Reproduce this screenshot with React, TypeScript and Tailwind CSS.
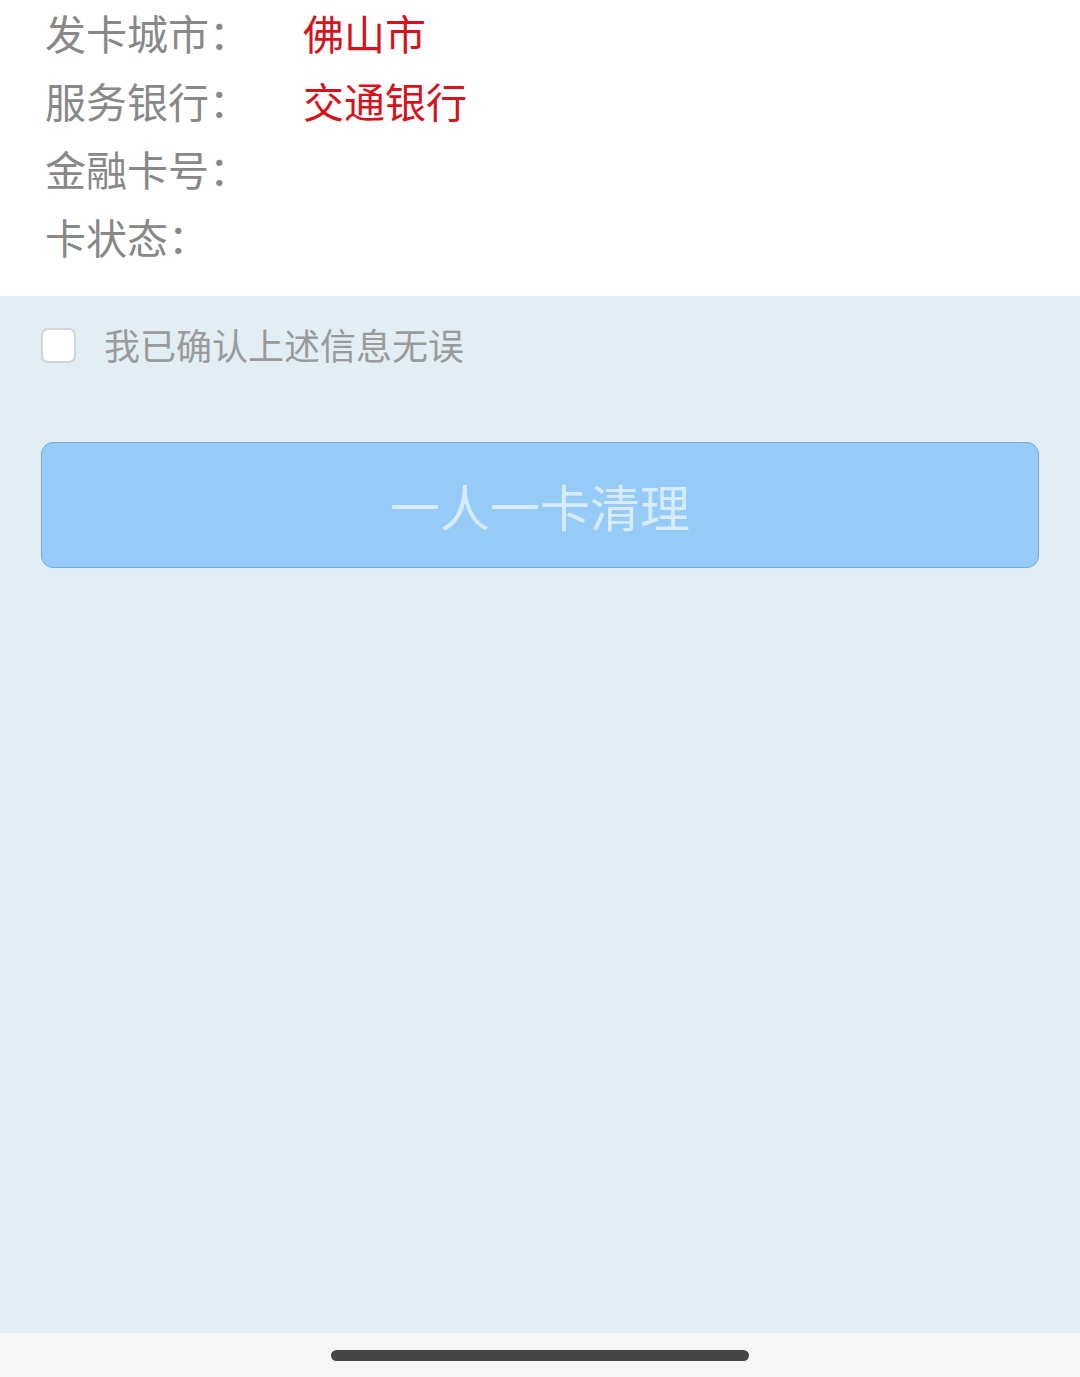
const FONT = { fontFamily: '"Noto Sans CJK SC", "Noto Sans", sans-serif' };

const rows: { label: string; value?: string }[] = [
  { label: '发卡城市：', value: '佛山市' },
  { label: '服务银行：', value: '交通银行' },
  { label: '金融卡号：' },
  { label: '卡状态：' },
];

export default function App() {
  return (
    <div className="flex h-[1377px] w-[1080px] flex-col bg-[#e2edf4]" style={FONT}>
      <div className="bg-white pb-[26px]">
        <div className="-mt-[2px]">
          {rows.map((r) => (
            <div key={r.label} className="flex h-[68px] items-center pl-[45px] text-[41px] leading-none">
              <span className="w-[258px] text-[#888888]">{r.label}</span>
              {r.value && <span className="text-[#d5131c]">{r.value}</span>}
            </div>
          ))}
        </div>
      </div>

      <div className="flex flex-1 flex-col px-[41px]">
        <label className="mt-[32px] flex items-center">
          <span className="h-[35px] w-[35px] rounded-[7px] border-2 border-[#d4d4d4] bg-white" />
          <span className="ml-[28px] -mt-[4px] text-[36px] leading-none text-[#9a9a9a]">我已确认上述信息无误</span>
        </label>

        <button
          disabled
          className="mt-[79px] flex h-[126px] w-full items-center justify-center rounded-[12px] border border-[#74ade0] bg-[#95cbf6] text-[50px] text-[#d6ecfb]"
        >
          一人一卡清理
        </button>
      </div>

      <div className="flex h-[44px] items-center justify-center bg-[#f6f6f6]">
        <div className="h-[11px] w-[418px] rounded-full bg-[#454545]" />
      </div>
    </div>
  );
}
